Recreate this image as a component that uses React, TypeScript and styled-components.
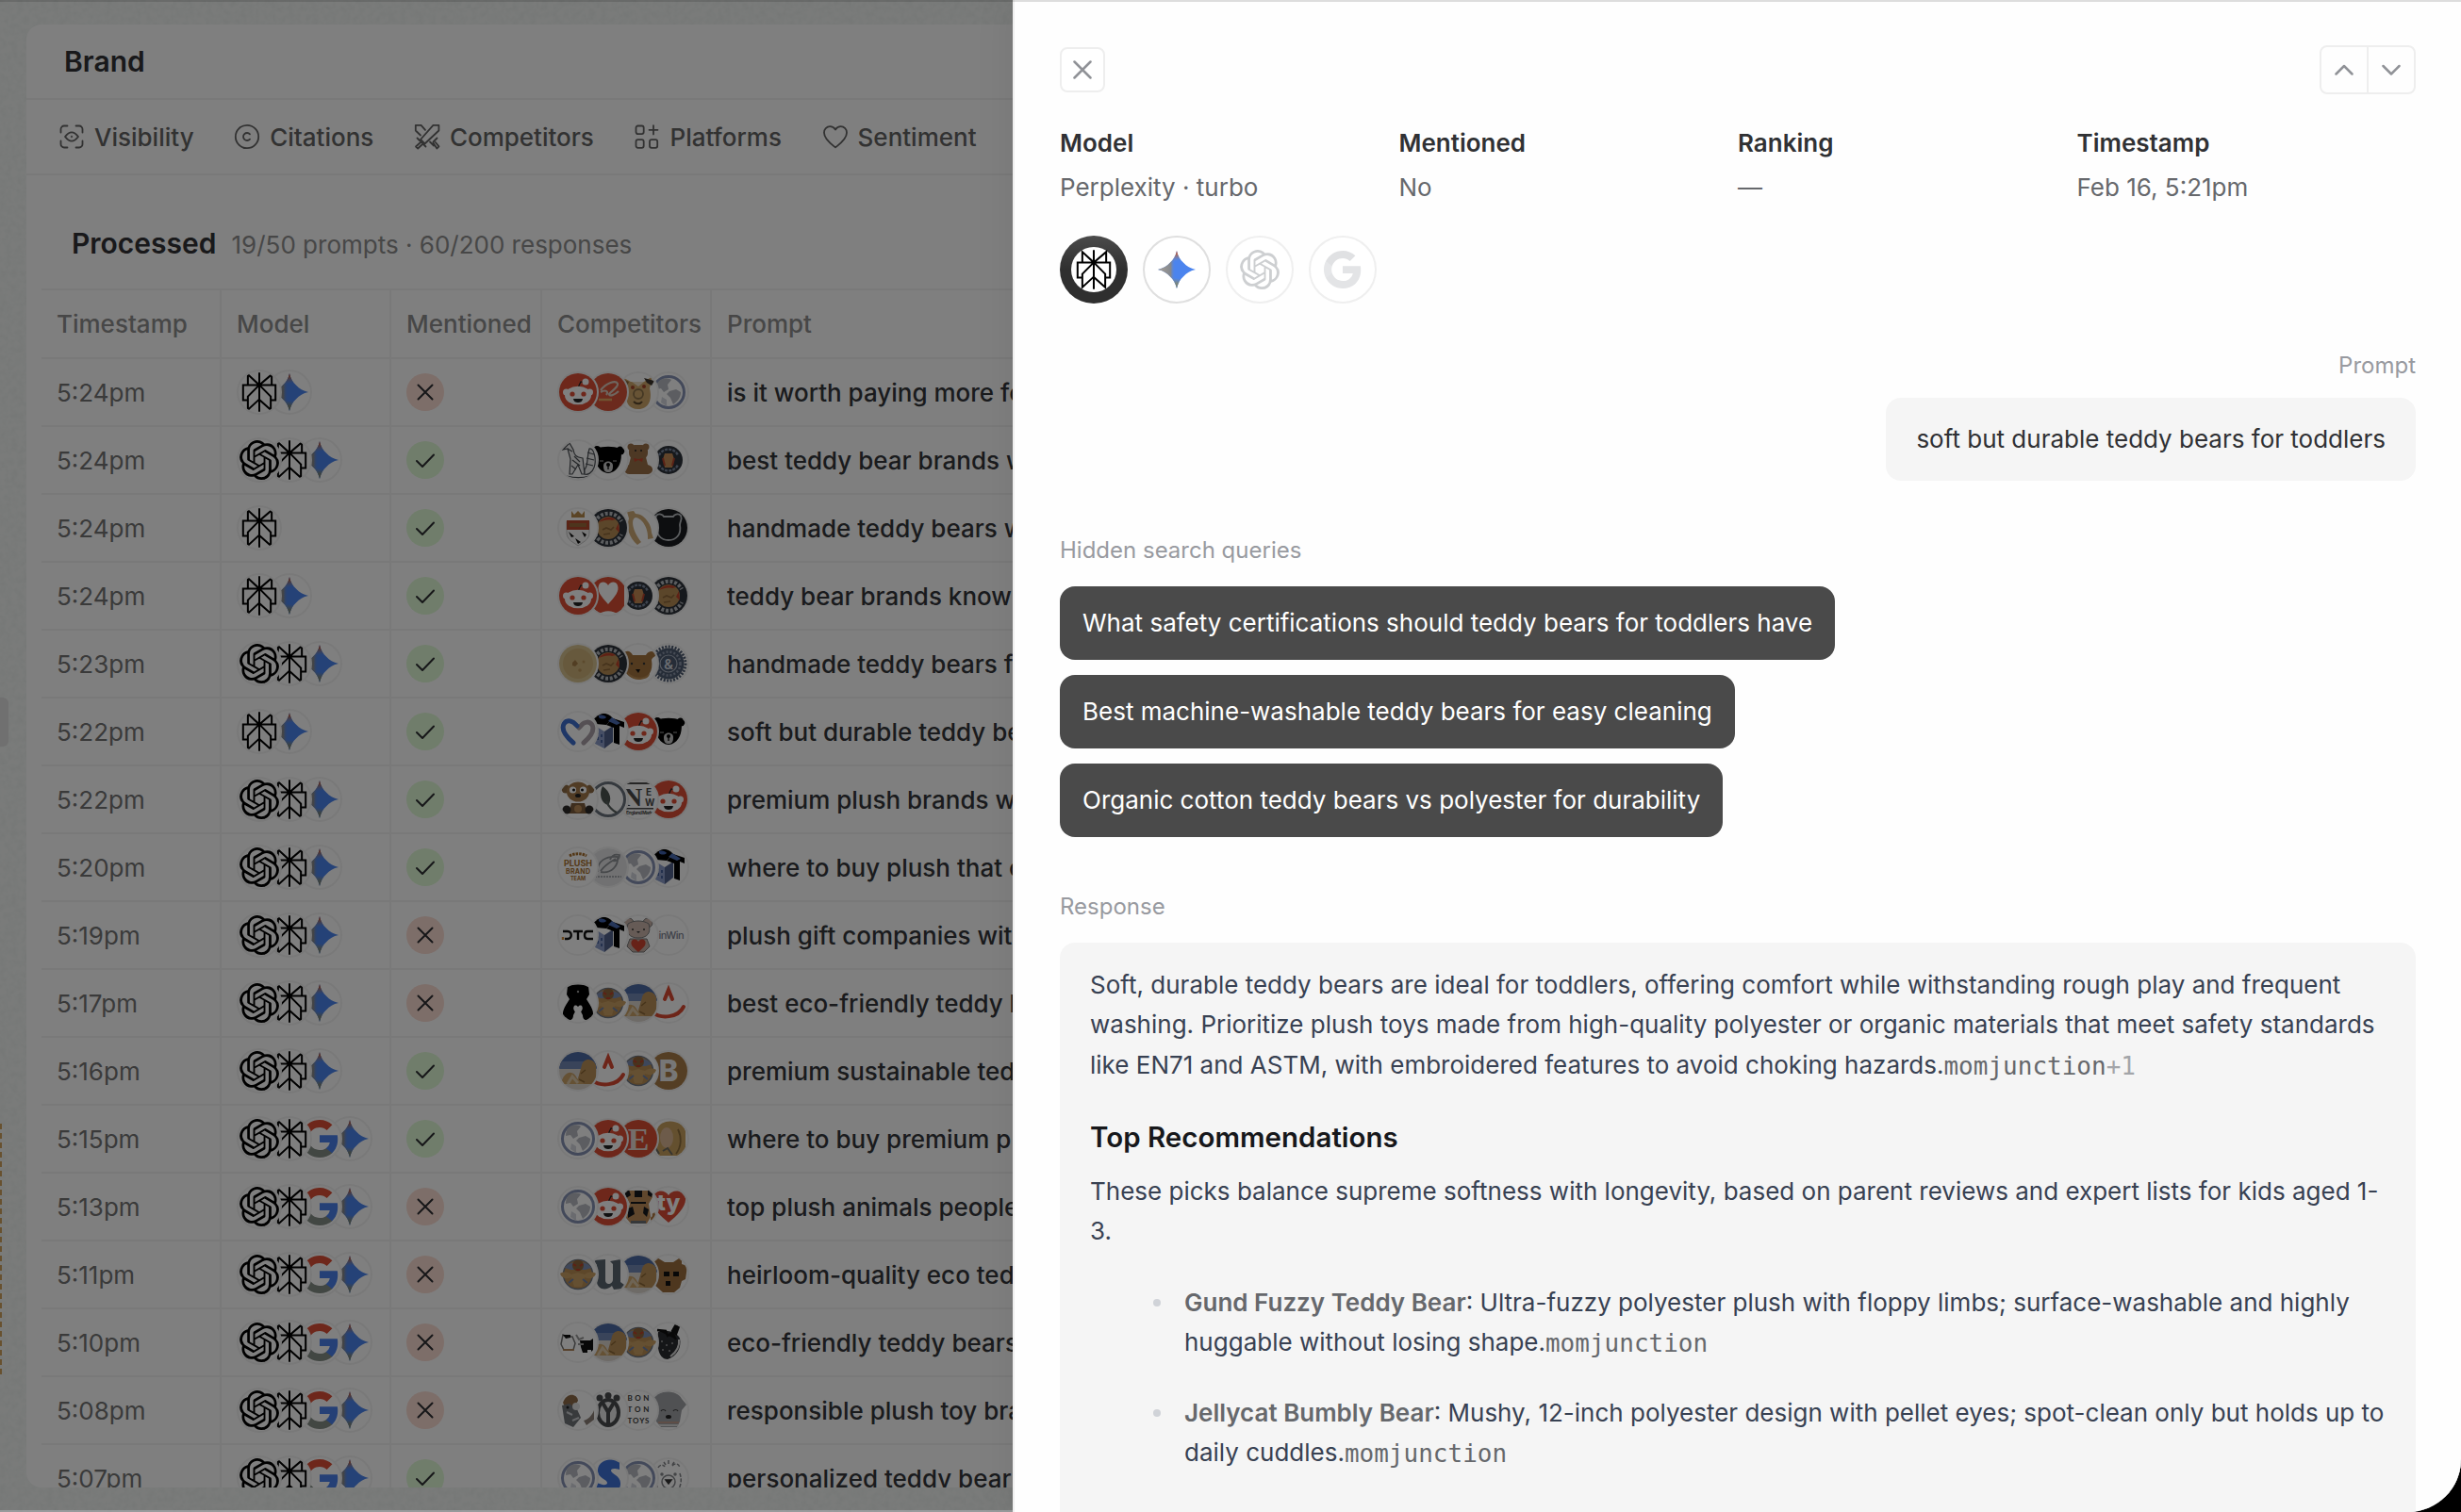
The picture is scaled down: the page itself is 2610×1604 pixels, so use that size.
import React from 'react'
import styled, { createGlobalStyle, css } from 'styled-components'
import { SiOpenai, SiPerplexity } from 'react-icons/si'

type Model = 'openai' | 'perplexity' | 'google' | 'gemini'

type ResponseRow = {
  time: string
  models: Model[]
  mentioned: boolean
  competitors: string[]
  prompt: string
}

const rows: ResponseRow[] = [
  { time: '5:24pm', models: ['perplexity', 'gemini'], mentioned: false, competitors: ['reddit', 'alibaba', 'terrier', 'globe'], prompt: 'is it worth paying more for' },
  { time: '5:24pm', models: ['openai', 'perplexity', 'gemini'], mentioned: true, competitors: ['fox', 'blackBear', 'teddy', 'vermontSmall'], prompt: 'best teddy bear brands w' },
  { time: '5:24pm', models: ['perplexity'], mentioned: true, competitors: ['crest', 'vermont', 'wishbone', 'darkBear'], prompt: 'handmade teddy bears w' },
  { time: '5:24pm', models: ['perplexity', 'gemini'], mentioned: true, competitors: ['reddit', 'redHeart', 'vermontSmall', 'vermont'], prompt: 'teddy bear brands know' },
  { time: '5:23pm', models: ['openai', 'perplexity', 'gemini'], mentioned: true, competitors: ['coin', 'vermont', 'brownFace', 'gear'], prompt: 'handmade teddy bears f' },
  { time: '5:22pm', models: ['perplexity', 'gemini'], mentioned: true, competitors: ['blueHeart', 'box', 'reddit', 'blackBear'], prompt: 'soft but durable teddy be' },
  { time: '5:22pm', models: ['openai', 'perplexity', 'gemini'], mentioned: true, competitors: ['cartoonBear', 'leaf', 'newEngland', 'reddit'], prompt: 'premium plush brands w' },
  { time: '5:20pm', models: ['openai', 'perplexity', 'gemini'], mentioned: true, competitors: ['orangeType', 'leafGray', 'globe', 'box'], prompt: 'where to buy plush that c' },
  { time: '5:19pm', models: ['openai', 'perplexity', 'gemini'], mentioned: false, competitors: ['dtc', 'box', 'pinkBear', 'inwin'], prompt: 'plush gift companies wit' },
  { time: '5:17pm', models: ['openai', 'perplexity', 'gemini'], mentioned: false, competitors: ['standingBear', 'giantTeddy', 'beach', 'smile'], prompt: 'best eco-friendly teddy b' },
  { time: '5:16pm', models: ['openai', 'perplexity', 'gemini'], mentioned: true, competitors: ['beach', 'smile', 'giantTeddy', 'brownB'], prompt: 'premium sustainable ted' },
  { time: '5:15pm', models: ['openai', 'perplexity', 'google', 'gemini'], mentioned: true, competitors: ['globe', 'reddit', 'etsy', 'blonde'], prompt: 'where to buy premium p' },
  { time: '5:13pm', models: ['openai', 'perplexity', 'google', 'gemini'], mentioned: false, competitors: ['globe', 'reddit', 'dog', 'ty'], prompt: 'top plush animals people' },
  { time: '5:11pm', models: ['openai', 'perplexity', 'google', 'gemini'], mentioned: false, competitors: ['giantTeddy', 'letterU', 'beach', 'blockBear'], prompt: 'heirloom-quality eco ted' },
  { time: '5:10pm', models: ['openai', 'perplexity', 'google', 'gemini'], mentioned: false, competitors: ['cow', 'beach', 'giantTeddy', 'strawberry'], prompt: 'eco-friendly teddy bears' },
  { time: '5:08pm', models: ['openai', 'perplexity', 'google', 'gemini'], mentioned: false, competitors: ['hedgehog', 'ringY', 'bonton', 'grayBear'], prompt: 'responsible plush toy bra' },
  { time: '5:07pm', models: ['openai', 'perplexity', 'google', 'gemini'], mentioned: true, competitors: ['globe', 'letterS', 'globe', 'sketchBear'], prompt: 'personalized teddy bear' },
]

const tabs = ['Visibility', 'Citations', 'Competitors', 'Platforms', 'Sentiment'] as const

const queries = [
  'What safety certifications should teddy bears for toddlers have',
  'Best machine-washable teddy bears for easy cleaning',
  'Organic cotton teddy bears vs polyester for durability',
]

const meta = [
  { label: 'Model', value: 'Perplexity · turbo' },
  { label: 'Mentioned', value: 'No' },
  { label: 'Ranking', value: '—' },
  { label: 'Timestamp', value: 'Feb 16, 5:21pm' },
]

const tabIcons: Record<(typeof tabs)[number], React.ReactNode> = {
  Visibility: (
    <>
      <path d="M2.500 9.500V6A3.500 3.500 0 0 1 6 2.500h3.500M18.500 2.500H22A3.500 3.500 0 0 1 25.500 6v3.500M25.500 18.500V22a3.500 3.500 0 0 1-3.500 3.500h-3.500M9.500 25.500H6A3.500 3.500 0 0 1 2.500 22v-3.500" />
      <path d="M7 14c2-2.600 4-4.600 7-4.600s5 2 7 4.600c-2 2.600-4 4.600-7 4.600s-5-2-7-4.600Z" />
      <circle cx="14" cy="14" r="0.3" />
    </>
  ),
  Citations: (
    <>
      <circle cx="14" cy="14" r="12.2" />
      <path d="M17 11.300a4 4 0 1 0 0 5.400" />
    </>
  ),
  Competitors: (
    <>
      <path d="M26.400 1.800h-6L7 17l4.500 4.500L26.400 7.500Z" />
      <path d="M3.500 15.500l9 9M7 20l-5 4.500 2.200 2L9 22M7 12.500 1.800 7.500V1.800h5.800l4.400 5" />
      <path d="M17 19.500l4 4M24.500 15.500l-4 4M20.500 20.500l3.800 6 2.200-2.200-3.600-4.300" />
    </>
  ),
  Platforms: (
    <>
      <rect x="2.500" y="2.500" width="8.200" height="8.600" rx="2" />
      <rect x="2.500" y="17.200" width="8.200" height="8.600" rx="2" />
      <rect x="17" y="17.200" width="8.200" height="8.600" rx="2" />
      <path d="M21 2.200v9.200M16.500 6.800h9" />
    </>
  ),
  Sentiment: (
    <path d="M14 25.400C10.500 22.500 2 17 2 9.800A6.300 6.300 0 0 1 8.300 3.200c2.500 0 4.400 1.300 5.700 3.300 1.300-2 3.200-3.300 5.700-3.300A6.300 6.300 0 0 1 26 9.800c0 7.200-8.500 12.700-12 15.600Z" />
  ),
}

const GeminiIcon: React.FC = () => (
  <svg width="40" height="40" viewBox="0 0 24 24">
    <defs>
      <linearGradient id="gem-left" x1="0" y1="0" x2="1" y2="0">
        <stop offset="0" stopColor="#a8a096" />
        <stop offset="0.34" stopColor="#85898f" />
        <stop offset="0.46" stopColor="#4b84ee" stopOpacity="0" />
      </linearGradient>
      <linearGradient id="gem-top" x1="0" y1="0" x2="0.15" y2="1">
        <stop offset="0" stopColor="#d8503a" />
        <stop offset="0.16" stopColor="#b0634c" />
        <stop offset="0.34" stopColor="#8a8f9a" stopOpacity="0" />
      </linearGradient>
      <linearGradient id="gem-bottom" x1="0" y1="1" x2="0.1" y2="0">
        <stop offset="0" stopColor="#6f7968" />
        <stop offset="0.18" stopColor="#7c867e" />
        <stop offset="0.32" stopColor="#828c84" stopOpacity="0" />
      </linearGradient>
    </defs>
    {['#4b84ee', 'url(#gem-left)', 'url(#gem-top)', 'url(#gem-bottom)'].map((fill) => (
      <path
        key={fill}
        fill={fill}
        d="M12 0c.7 3.300 2.200 5.800 4.300 7.700C18.200 9.800 20.700 11.300 24 12c-3.300.7-5.800 2.200-7.700 4.300C14.200 18.200 12.700 20.700 12 24c-.7-3.300-2.200-5.800-4.300-7.700C5.800 14.200 3.300 12.700 0 12c3.300-.7 5.800-2.200 7.700-4.300C9.800 5.800 11.300 3.300 12 0Z"
      />
    ))}
  </svg>
)

const GoogleIcon: React.FC<{ muted?: boolean }> = ({ muted }) => (
  <svg width="40" height="40" viewBox="1 1 22 22">
    <path fill={muted ? '#e3e4e6' : '#4b80ec'} d="M22.56 12.25c0-.78-.07-1.53-.2-2.25H12v4.26h5.92c-.26 1.37-1.04 2.53-2.21 3.31v2.77h3.57c2.08-1.92 3.28-4.74 3.28-8.09z" />
    <path fill={muted ? '#e3e4e6' : '#858e87'} d="M12 23c2.97 0 5.46-.98 7.28-2.66l-3.57-2.77c-.98.66-2.23 1.06-3.71 1.06-2.86 0-5.29-1.93-6.16-4.53H2.18v2.84C3.99 20.53 7.7 23 12 23z" />
    <path fill={muted ? '#e6e7e9' : '#e8a93a'} d="M5.84 14.09c-.22-.66-.35-1.36-.35-2.09s.13-1.43.35-2.09V7.07H2.18C1.43 8.55 1 10.22 1 12s.43 3.45 1.18 4.93l2.85-2.22.81-.62z" />
    <path fill={muted ? '#e0e1e3' : '#dd4f36'} d="M12 5.38c1.62 0 3.06.56 4.21 1.64l3.15-3.15C17.45 2.09 14.97 1 12 1 7.7 1 3.99 3.47 2.18 7.07l3.66 2.84c.87-2.6 3.3-4.53 6.16-4.53z" />
  </svg>
)

const modelIcons: Record<Model, React.ReactNode> = {
  openai: <SiOpenai size={42} />,
  perplexity: <SiPerplexity size={42} />,
  google: <GoogleIcon />,
  gemini: <GeminiIcon />,
}

// favicons, drawn on a 40x40 grid and clipped to a circle by the avatar
const favicons: Record<string, React.ReactNode> = {
  reddit: (
    <>
      <rect width="40" height="40" fill="#dd4f36" />
      <path d="M20 15l3-6 5 1" stroke="#222" strokeWidth="1.2" fill="none" />
      <ellipse cx="20" cy="23.5" rx="14" ry="9.8" fill="#fff" />
      <circle cx="7.5" cy="20" r="3.5" fill="#fff" />
      <circle cx="32.5" cy="20" r="3.5" fill="#fff" />
      <circle cx="28" cy="9" r="3.5" fill="#fff" />
      <circle cx="14" cy="22" r="2.6" fill="#dd4f36" />
      <circle cx="26" cy="22" r="2.6" fill="#dd4f36" />
      <path d="M15 27h10c-.5 3-2.500 4-5 4s-4.500-1-5-4Z" fill="#222" />
    </>
  ),
  alibaba: (
    <>
      <rect width="40" height="40" fill="#d8553a" />
      <path d="M12 18c6-8 16-11 18-7 1 4-7 8-9 11 0 3 6 1 10-3M12 20c5-3 9-1 6 3" stroke="#dccabc" strokeWidth="2.2" fill="none" />
      <path d="M10 28h14" stroke="#e0a863" strokeWidth="2.6" />
    </>
  ),
  terrier: (
    <>
      <path d="M3 4l9 5h14l9-6-3 13c3 12-1 22-12 22S6 30 7 19Z" fill="#cfa76b" />
      <path d="M13 9h13l-6 5Z" fill="#eadcc4" />
      <path d="M26 5l11 3-3 5-5-3Z" fill="#3d342c" />
      <path d="M4 6l6 3-2 5Z" fill="#8a6638" />
      <circle cx="14" cy="15" r="2" fill="#a5452a" />
      <circle cx="26" cy="14" r="2" fill="#a5452a" />
      <circle cx="20" cy="22" r="5" fill="none" stroke="#8b7048" strokeWidth="1.8" />
      <path d="M15 30c3 3 7 3 9 0" stroke="#5a472d" strokeWidth="2" fill="none" />
    </>
  ),
  globe: (
    <>
      <circle cx="20" cy="20" r="16.5" fill="#fff" stroke="#8793b5" strokeWidth="3" />
      <path d="M10 8c5-4 10-3 13-1l-4 5 1 5-5 3-3-4-5 1c0-4 1-7 3-9ZM21 19l7-2 5 3c0 6-4 10-8 13l-3-7-4-4Z" fill="#b8bbc3" />
      <path d="M13 25l5 3v7l-6-4Z" fill="#d4d7de" />
    </>
  ),
  fox: (
    <g fill="#eee" stroke="#4c5055" strokeWidth="1.2">
      <path d="M4 9l7-7 4 7c1 6 3 8 10 9l2 17h-3l-4-10-6 10h-3l1-16-3-11Z" />
      <path d="M27 30c4-4 2-12 5-22 5-1 8 12 5 20-2 6-7 8-10 7Z" />
      <path d="M8 37c8 2 17 2 24 0M9 8l5 3M14 20l8 6M16 16l6 6M13 26l5 4M30 12l7 2M29 18l8 2M28 24l8 2" fill="none" />
    </g>
  ),
  blackBear: (
    <>
      <circle cx="8" cy="10" r="5" fill="#000" />
      <circle cx="33" cy="10" r="4.5" fill="#000" />
      <path d="M7 8c8-3 18-3 26 0 3 12-2 25-13 26C9 33 4 20 7 8Z" fill="#000" />
      <path d="M15 26c0-6 10-6 10 0s-2 7-5 7-5-1-5-7Z" fill="#c9c9c9" />
      <circle cx="20" cy="25" r="2" fill="#000" />
      <path d="M20 26v4M12 20l3 1M28 20l-3 1" stroke="#000" strokeWidth="1.3" />
      <path d="M11 21h4M25 21h4" stroke="#aaa" strokeWidth="1.2" />
    </>
  ),
  teddy: (
    <g fill="#9a7148">
      <circle cx="12" cy="6" r="3.5" />
      <circle cx="28" cy="6" r="3.5" />
      <rect x="10" y="4" width="20" height="15" rx="6" />
      <path d="M12 17h16l2 8c8 2 6 11-2 10h-16c-8 1-9-8-2-10Z" />
      <circle cx="17" cy="10" r="1" fill="#222" />
      <circle cx="23" cy="10" r="1" fill="#222" />
      <path d="M15 18l5 1 5-1-1 4-4-2-4 2Z" fill="#c0472f" />
    </g>
  ),
  vermontSmall: (
    <>
      <circle cx="20" cy="20" r="15" fill="#2d323a" />
      <path d="M10 15a11 11 0 0 1 20 0M10 25a11 11 0 0 0 20 0" fill="none" stroke="#7b879c" strokeWidth="2.4" strokeDasharray="3 1.2" />
      <path d="M16 13h8l2 6-2 9h-8l-2-9Z" fill="#c48a54" />
      <path d="M14 18l2 8M26 18l-2 8" stroke="#b4432c" strokeWidth="2" />
    </>
  ),
  vermont: (
    <>
      <rect width="40" height="40" fill="#2d323a" />
      <path d="M6 14A15.500 15.500 0 0 1 34 13M6 27a15.500 15.500 0 0 0 28 0" fill="none" stroke="#b5b8bd" strokeWidth="4" strokeDasharray="3 1.8" />
      <circle cx="20" cy="20" r="12" fill="#b68c55" />
      <path d="M10 14c4-5 12-7 18-3l-4 1c-5-1-9 0-14 2ZM31 15l1 10-4-4Z" fill="#c0432b" />
      <path d="M14 22l4-2 5 2 3-3M15 27l7-1" stroke="#8c6638" strokeWidth="1.6" fill="none" />
    </>
  ),
  crest: (
    <>
      <path d="M13 2l3 4 4-4 4 4 3-4v7H13Z" fill="#b78a4c" />
      <path d="M8 13h24v12c0 8-7 10-12 14-5-4-12-6-12-14Z" fill="#f4f4f4" stroke="#c5c5c5" />
      <path d="M8 12h24v10H8Z" fill="#b4482c" />
      <path d="M11 15h18v4H11Z" fill="#9a6a3a" />
      <path d="M10 24l6 5-3 1ZM24 24l5 3-2 3ZM17 31l6 4-3 2Z" fill="#111" />
    </>
  ),
  wishbone: (
    <path d="M8 3l7-1 2 3c9 0 17 11 17 20l2 6-6 1c1-10-5-22-13-23-6 2-2 16 6 26l-4 3C10 30 7 20 10 10Z" fill="#cfab77" />
  ),
  darkBear: (
    <>
      <rect width="40" height="40" fill="#1b1d20" />
      <path d="M7 7c3-3 7-1 8 1h10c1-2 5-4 8-1 2 4-1 6-1 10 2 10-4 16-12 16S6 27 8 17c0-4-3-6-1-10Z" fill="#1b1d20" stroke="#b9bcc0" strokeWidth="1.8" />
    </>
  ),
  redHeart: (
    <>
      <rect width="37" height="36" fill="#db4f34" />
      <path d="M20 29C12 20 8 15 10 9c2-5 8-4 10 0 2-4 8-5 10 0 2 6-2 11-10 20Z" fill="#fff" />
      <path d="M4 38l4-6h24l5 4v2Z" fill="#db4f34" />
      <path d="M10 40c4-5 16-5 20 0Z" fill="#fff" />
    </>
  ),
  coin: (
    <>
      <rect width="40" height="40" fill="#d6c290" />
      <circle cx="20" cy="20" r="16" fill="#cfb27a" />
      <path d="M14 19l3-3 3 4-3 3-3-1Z" fill="#a57d47" />
      <circle cx="22" cy="27" r="1.8" fill="#b8955b" />
      <circle cx="26" cy="18" r="1.5" fill="#b8955b" />
    </>
  ),
  brownFace: (
    <>
      <path d="M4 9c4-4 8-2 10 2h14c2-4 8-6 11-1-1 3-4 3-5 6 2 12-3 20-14 20-14 0-17-12-14-19Z" fill="#a4743f" />
      <path d="M8 28c6 8 18 9 24 2 0 5-6 7-12 7s-11-4-12-9Z" fill="#bb8a50" />
      <path d="M17 26h5l-2 4Z" fill="#111" />
      <circle cx="13" cy="20" r="1.2" fill="#333" />
      <circle cx="26" cy="20" r="1.2" fill="#333" />
    </>
  ),
  gear: (
    <>
      <circle cx="20" cy="20" r="18" fill="none" stroke="#4d5a70" strokeWidth="3" strokeDasharray="2 1.5" />
      <circle cx="20" cy="20" r="16.5" fill="#4d5a70" />
      <circle cx="20" cy="20" r="12.5" fill="none" stroke="#8d97aa" strokeWidth="2.5" strokeDasharray="2 2" />
      <circle cx="20" cy="20" r="9" fill="#4d5a70" stroke="#a9b1bf" strokeWidth="1.2" />
      <text x="20" y="25.500" fontSize="15" textAnchor="middle" fill="#d3d8e0" fontWeight="600">&amp;</text>
    </>
  ),
  blueHeart: (
    <g fill="none" strokeWidth="5" strokeLinecap="round">
      <path d="M26 32c8-7 12-13 9-19-3-4-8-4-12 1l-2 2" stroke="#aaa0a8" />
      <path d="M15 32C8 26 2 18 5 12c3-5 9-4 14 2" stroke="#3f6fce" />
    </g>
  ),
  box: (
    <>
      <path d="M3 12l13 8v18L6 33Z" fill="#8d9dc8" />
      <path d="M16 20l9-6v17l-9 7Z" fill="#53628c" />
      <path d="M2 6C8-1 20-1 25 6l-7 7-11-1Z" fill="#000" />
      <path d="M10 3c3-1 7 0 8 2-2 2-6 2-8 0Z" fill="#3e60ad" />
      <path d="M25 6l12 4v6l-5-2v20l-6-2V16l-8-3Z" fill="#000" />
      <path d="M24 5l9 6-4 2-9-4Z" fill="#4b6cb4" />
      <path d="M9 20v3M9 26v3M13 23v3M13 29v3" stroke="#33508e" strokeWidth="1.5" />
    </>
  ),
  cartoonBear: (
    <>
      <circle cx="7" cy="9" r="4.5" fill="#8d6b44" />
      <circle cx="33" cy="9" r="4.5" fill="#8d6b44" />
      <ellipse cx="20" cy="12" rx="12" ry="10.500" fill="#a3794a" />
      <circle cx="14.500" cy="10" r="3.6" fill="#fff" />
      <circle cx="25.500" cy="10" r="3.6" fill="#fff" />
      <circle cx="15.500" cy="10" r="1.5" fill="#111" />
      <circle cx="24.500" cy="10" r="1.5" fill="#111" />
      <ellipse cx="20" cy="16" rx="3" ry="2" fill="#222" />
      <path d="M13 24h14l3 11H10Z" fill="#7c5d3c" />
      <circle cx="20" cy="30" r="4" fill="#b88b58" />
      <circle cx="8" cy="31" r="4.5" fill="#2c2a28" />
      <circle cx="32" cy="31" r="4.5" fill="#2c2a28" />
    </>
  ),
  leaf: (
    <>
      <circle cx="20" cy="20" r="17.500" fill="none" stroke="#6a737d" strokeWidth="3" />
      <path d="M14 6c9 6 10 15 6 20-8-2-10-12-6-20Z" fill="#4c5450" />
      <path d="M18 22c3 7 7 10 11 12" stroke="#59615f" strokeWidth="2" fill="none" />
    </>
  ),
  newEngland: (
    <g fill="#4a4a4a">
      <rect x="8" y="2" width="24" height="2" />
      <text x="4" y="27" fontFamily="Liberation Serif, serif" fontSize="28" fontWeight="700">N</text>
      <text x="28" y="16" fontSize="10" fontWeight="700">E</text>
      <text x="27" y="27" fontSize="10" fontWeight="700">W</text>
      <rect x="6" y="29" width="30" height="1.500" />
      <text x="7" y="35.500" fontSize="5" fontWeight="700" textLength="28">England Mark</text>
    </g>
  ),
  orangeType: (
    <g fill="#a8712f" fontWeight="700" textAnchor="middle">
      <path d="M11 8c5-3 13-3 18 0" stroke="#a8712f" strokeWidth="3" strokeDasharray="2.500 1" fill="none" />
      <text x="20" y="19" fontSize="9" textLength="30">PLUSH</text>
      <text x="20" y="27" fontSize="7" textLength="26">BRAND</text>
      <text x="20" y="34" fontSize="5.500">TEAM</text>
    </g>
  ),
  leafGray: (
    <>
      <rect width="40" height="40" fill="#e2e3e5" />
      <path d="M9 25C8 13 18 8 30 9c1 9-6 18-18 16M12 24c4-6 9-9 16-13M22 12c2-5 6-6 10-5 0 5-4 7-8 6" fill="none" stroke="#8f9297" strokeWidth="1.800" />
      <path d="M6 30h28" stroke="#a5a8ac" strokeWidth="2" strokeDasharray="2 1" />
    </>
  ),
  dtc: (
    <g fill="none" stroke="#111" strokeWidth="2.400">
      <path d="M4 16h5c5 0 5 8 0 8H6M15 16h10M20 16v9M36 16h-6c-4 0-4 8 0 8h6" />
      <path d="M4 22v3" stroke="#d08a3a" />
    </g>
  ),
  inwin: (
    <text x="23" y="24" fontSize="11" fontWeight="500" fill="#7d8291" textAnchor="middle" textLength="27">inWin</text>
  ),
  pinkBear: (
    <>
      <circle cx="10" cy="7" r="5" fill="#c9b3a9" stroke="#777" />
      <circle cx="30" cy="7" r="5" fill="#c9b3a9" stroke="#777" />
      <path d="M9 8c6-4 16-4 22 0 3 10-2 15-11 15S6 18 9 8Z" fill="#cdb7ad" stroke="#777" />
      <path d="M11 24h18l3 8-6 6H14l-6-6Z" fill="#c4aea5" stroke="#777" />
      <path d="M20 38c-6-5-9-8-7-12 2-2 5-2 7 1 2-3 5-3 7-1 2 4-1 7-7 12Z" fill="#cf4530" />
      <path d="M18 16h4l-2 2Z" fill="#333" />
      <circle cx="14" cy="14" r="1" fill="#333" />
      <circle cx="26" cy="14" r="1" fill="#333" />
    </>
  ),
  standingBear: (
    <>
      <path d="M9 2c4-2 18-2 22 0l1 9-3 5c5 8 10 15 5 21-5 3-9 1-9-4l-2-4h-6l-2 4c0 5-4 7-9 4-5-6 0-13 5-21l-3-5Z" fill="#000" />
      <path d="M20 32c-4-3-6-6-4-9 2-1 3 0 4 1 1-1 2-2 4-1 2 3 0 6-4 9Z" fill="#fff" />
      <path d="M18 32h4v8h-4Z" fill="#fff" />
      <circle cx="20" cy="8" r="1.200" fill="#999" />
    </>
  ),
  giantTeddy: (
    <>
      <circle cx="20" cy="20" r="15.500" fill="#bb8f55" stroke="#6f7886" strokeWidth="1.500" />
      <path d="M6 13c4-8 24-8 28 0l-6 2H12Z" fill="#7d8fb5" />
      <circle cx="20" cy="10.500" r="6" fill="#91663c" />
      <path d="M1 19c5-3 9-1 12 1l7-2 7 2c3-2 7-4 12-1-2 6-8 6-12 4l-3 10h-8l-3-10c-4 2-10 2-12-4Z" fill="#caa064" />
      <path d="M15 9l3 2M25 9l-3 2M18 15h4" stroke="#bd4129" strokeWidth="2" />
      <path d="M10 29l5-4M30 29l-5-4" stroke="#6e7fa2" strokeWidth="2" />
    </>
  ),
  beach: (
    <>
      <rect width="40" height="40" fill="#dcd6cf" />
      <rect width="40" height="17" fill="#4d6ba5" />
      <path d="M0 10h40v8H0Z" fill="#7389b5" />
      <path d="M24 14c2-8 12-8 15 0v20H22l-2-6Z" fill="#bb9159" />
      <path d="M3 30c4-10 12-11 16-2l8 6H5Z" fill="#caa269" />
      <path d="M9 34l5-8 6 7" stroke="#dcc8a8" strokeWidth="3" fill="none" />
      <path d="M23 23l5-4M21 29l6 3" stroke="#8c6836" strokeWidth="1.500" />
    </>
  ),
  smile: (
    <g fill="none" stroke="#da4b33" strokeLinecap="round">
      <path d="M16 16l4-10 4 10" strokeWidth="4" />
      <path d="M3 30c9 7 27 6 33-6" strokeWidth="4" />
    </g>
  ),
  brownB: (
    <>
      <rect width="40" height="40" fill="#a97c49" />
      <text x="20" y="31" fontSize="31" fontWeight="800" fill="#eee" textAnchor="middle">B</text>
    </>
  ),
  etsy: (
    <>
      <rect width="40" height="40" fill="#db4e33" />
      <text x="20" y="31.500" fontSize="34" fontWeight="700" fill="#e9dcd5" textAnchor="middle" fontFamily="Liberation Serif, serif">E</text>
    </>
  ),
  blonde: (
    <>
      <path d="M8 10C12-2 34-1 38 12v20l-8 6H10L4 26Z" fill="#c9a05f" />
      <ellipse cx="18" cy="19" rx="7" ry="11" fill="#dab695" />
      <path d="M7 12l-3 14 6 10M14 33l5-3 5 7" stroke="#6d6a60" strokeWidth="2" fill="none" />
      <path d="M30 10c4 8 4 18-2 26" stroke="#8d6e3c" strokeWidth="1.800" fill="none" />
    </>
  ),
  dog: (
    <>
      <path d="M8 3h24l3 7-4 7 2 14-4 7H12l-5-6 4-15-4-8Z" fill="#c18e5b" />
      <path d="M5 3l5-1 2 6-5 3ZM30 2l6 2-2 6-4-2ZM16 3h8v7h-8ZM9 22l5-2 2 8-7 4ZM26 20l5 3-2 8-4-4ZM12 15h16v2H12Z" fill="#17191c" />
      <path d="M12 35h16v3H12Z" fill="#6d7074" />
      <path d="M33 33c3 0 4-4 3-6" stroke="#b27b43" strokeWidth="3" fill="none" />
    </>
  ),
  ty: (
    <>
      <path d="M20 37C12 30 1 21 3 11 5 2 16 1 20 8c4-7 16-6 18 3 1 9-9 19-18 26Z" fill="#dc4c37" />
      <text x="20" y="24" fontSize="24" fontWeight="800" fill="#fff" textAnchor="middle">ty</text>
    </>
  ),
  letterU: (
    <path d="M5 5l12-1v22c0 6 8 5 8-1V9l-3-3 11-2v24l4 3-1 4-10 1-2-4c-6 6-16 4-16-5V10Z" fill="#5a6670" />
  ),
  blockBear: (
    <>
      <path d="M6 1l10 6h9l9-6v8l6 2-2 14-4 2-2 7-6 5H14L4 30 2 16Z" fill="#9c6f3e" />
      <path d="M15 17h6v5h-6ZM25 17h6v5h-6ZM17 27h5v5h-5Z" fill="#111" />
    </>
  ),
  cow: (
    <>
      <path d="M4 12l4 2h6l3 7-2 7H5l-3-6Z" fill="#fff" stroke="#777" strokeWidth="1.500" />
      <path d="M4 12h8v3l-5 1ZM22 18h11l3-2v12l-2 2v-2h-4v3h-5l-2-6Z" fill="#111" />
      <path d="M18 12l3 5 5-2M20 22h6" stroke="#999" strokeWidth="2" fill="none" />
      <path d="M4 28h12" stroke="#b9824a" strokeWidth="1.500" />
    </>
  ),
  strawberry: (
    <>
      <path d="M9 9c8-3 20 0 23 7 2 9-3 19-13 22-9 0-12-12-10-29Z" fill="#2b2d30" />
      <path d="M24 8l4-7 3 2-3 8ZM8 7l9 1 2 5 5-3 4 7" stroke="#111" strokeWidth="2.500" fill="#111" />
      <path d="M31 17c1 8-2 13-9 18" stroke="#ddd" strokeWidth="2" fill="none" />
      <path d="M13 18v2M18 22v2M14 27v2M21 28v2M24 20v2" stroke="#999" strokeWidth="1.500" />
    </>
  ),
  hedgehog: (
    <>
      <path d="M4 12C8 1 19 2 20 10l-4 6H6Z" fill="#8d6b48" />
      <path d="M3 15l8-2 8 6 4 9-8 10-9-4Z" fill="#707479" />
      <circle cx="18" cy="16" r="4" fill="#e2e2e2" />
      <path d="M26 31c4-1 9-5 11-11v10l-8 6Z" fill="#8c8078" />
      <path d="M8 22l6 3M14 31l7-3" stroke="#c9cbce" strokeWidth="2" />
      <circle cx="9" cy="17" r="1.500" fill="#222" />
    </>
  ),
  ringY: (
    <>
      <circle cx="11" cy="7" r="3.500" fill="#4a4c4f" />
      <circle cx="20" cy="4.500" r="3.500" fill="#4a4c4f" />
      <circle cx="29" cy="7" r="3.500" fill="#4a4c4f" />
      <ellipse cx="20" cy="22.500" rx="11" ry="13.500" fill="#e8e8e8" stroke="#4a4c4f" strokeWidth="4" />
      <path d="M14 12l6 10 6-10M20 21v13" stroke="#4a4c4f" strokeWidth="4" fill="none" />
    </>
  ),
  bonton: (
    <g fill="#3c3c3c" fontWeight="700" fontSize="8" textAnchor="middle" fontFamily="Lato, sans-serif">
      <text x="20" y="10" textLength="23">BON</text>
      <text x="20" y="22" textLength="23">TON</text>
      <text x="20" y="34" textLength="23">TOYS</text>
    </g>
  ),
  grayBear: (
    <>
      <path d="M5 6C12-2 30-1 34 8l5 6-5 6-2 12-3 6H12L7 32Z" fill="#a0a2a6" />
      <path d="M12 21c1-2 4-2 5 0M25 21c1-2 4-2 5 0" stroke="#444" strokeWidth="1.200" fill="none" />
      <ellipse cx="20" cy="27" rx="3" ry="2" fill="#222" />
      <path d="M9 33h22" stroke="#c99a86" strokeWidth="1.500" />
      <path d="M10 36h20" stroke="#ddd" strokeWidth="2" />
    </>
  ),
  letterS: (
    <path d="M32 2v9c-6-2-9-1-9 1 0 4 11 5 10 15-1 11-18 12-26 7v-10c6 4 12 4 12 1 0-4-11-5-10-14C10 1 23-2 32 2Z" fill="#3f72d8" />
  ),
  sketchBear: (
    <g fill="none" stroke="#84878b" strokeWidth="1.500">
      <path d="M9 9c2-4 6-3 7-1M24 7c2-3 7-3 8 2M7 15c-3 12 3 22 13 22s16-10 12-22" strokeDasharray="4 1.500" />
      <circle cx="20" cy="24" r="7" />
      <circle cx="13" cy="16" r="1" />
      <circle cx="27" cy="16" r="1" />
      <path d="M17 22h6l-3 4Z" fill="#333" stroke="#333" />
      <path d="M20 1v4M15 3l2 3M26 3l-2 3" />
    </g>
  ),
}

const App: React.FC = () => (
  <Screen>
    <GlobalStyle />
    <Grain preserveAspectRatio="none">
      <filter id="grain">
        <feTurbulence type="fractalNoise" baseFrequency="0.16" numOctaves={2} seed={4} />
        <feColorMatrix values="0 0 0 0 0.55  0 0 0 0 0.6  0 0 0 0 0.58  0.9 0 0 0 -0.3" />
      </filter>
      <rect width="100%" height="100%" filter="url(#grain)" />
    </Grain>
    <EdgeSmudge />
    <EdgeStitch />

    <Card>
      <CardHeader>Brand</CardHeader>
      <Tabs>
        {tabs.map((tab) => (
          <Tab key={tab}>
            <svg width="28" height="28" viewBox="0 0 28 28">{tabIcons[tab]}</svg>
            {tab}
          </Tab>
        ))}
      </Tabs>
      <SectionTitle>
        <h2>Processed</h2>
        <span>19/50 prompts · 60/200 responses</span>
      </SectionTitle>
      <Table>
        <HeadRow>
          <HeadCell>Timestamp</HeadCell>
          <HeadCell>Model</HeadCell>
          <HeadCell>Mentioned</HeadCell>
          <HeadCell>Competitors</HeadCell>
          <HeadCell>Prompt</HeadCell>
        </HeadRow>
        {rows.map((row, i) => (
          <Row key={i}>
            <Cell>{row.time}</Cell>
            <Cell>
              <Stack>
                {row.models.map((model) => (
                  <Avatar key={model} size={48}>{modelIcons[model]}</Avatar>
                ))}
              </Stack>
            </Cell>
            <Cell>
              <Mention yes={row.mentioned}>
                <svg width="20" height="20" viewBox="0 0 20 20">
                  <path d={row.mentioned ? 'M1 11l6 6L19 4.500' : 'M2.500 2.500l15 15M17.500 2.500l-15 15'} />
                </svg>
              </Mention>
            </Cell>
            <Cell>
              <Stack>
                {row.competitors.map((name, j) => (
                  <Avatar key={j} size={44}>
                    <svg width="40" height="40" viewBox="0 0 40 40">{favicons[name]}</svg>
                  </Avatar>
                ))}
              </Stack>
            </Cell>
            <PromptCell>{row.prompt}</PromptCell>
          </Row>
        ))}
      </Table>
    </Card>

    <Dimmer />
    <Drawer>
      <Toolbar>
        <IconButton>
          <svg width="20" height="20" viewBox="0 0 20 20"><path d="M1.500 1.500l17 17M18.500 1.500l-17 17" /></svg>
        </IconButton>
        <Pager>
          <PagerButton>
            <svg width="20" height="20" viewBox="0 0 20 20"><path d="M1.500 14.500 10 6l8.500 8.500" /></svg>
          </PagerButton>
          <PagerButton>
            <svg width="20" height="20" viewBox="0 0 20 20"><path d="M1.500 6 10 14.500 18.500 6" /></svg>
          </PagerButton>
        </Pager>
      </Toolbar>

      <MetaGrid>
        {meta.map(({ label, value }) => (
          <div key={label}>
            <MetaLabel>{label}</MetaLabel>
            <MetaValue>{value}</MetaValue>
          </div>
        ))}
      </MetaGrid>

      <ModelPicker>
        <SelectedModel><span><SiPerplexity size={42} /></span></SelectedModel>
        <ModelOption><GeminiIcon /></ModelOption>
        <ModelOption disabled><SiOpenai size={42} /></ModelOption>
        <ModelOption disabled><GoogleIcon muted /></ModelOption>
      </ModelPicker>

      <PromptBlock>
        <Label>Prompt</Label>
        <Bubble>soft but durable teddy bears for toddlers</Bubble>
      </PromptBlock>

      <Queries>
        <Label>Hidden search queries</Label>
        {queries.map((query) => (
          <Query key={query}>{query}</Query>
        ))}
      </Queries>

      <Label>Response</Label>
      <Answer>
        <p>
          Soft, durable teddy bears are ideal for toddlers, offering comfort while withstanding rough play and frequent
          washing. Prioritize plush toys made from high-quality polyester or organic materials that meet safety standards
          like EN71 and ASTM, with embroidered features to avoid choking hazards.<Source>momjunction<i>+1</i></Source>
        </p>
        <h3>Top Recommendations</h3>
        <p>
          These picks balance supreme softness with longevity, based on parent reviews and expert lists for kids aged
          1-<wbr />3.
        </p>
        <ul>
          <li>
            <strong>Gund Fuzzy Teddy Bear</strong>: Ultra-fuzzy polyester plush with floppy limbs; surface-washable and highly
            huggable without losing shape.<Source>momjunction</Source>
          </li>
          <li>
            <strong>Jellycat Bumbly Bear</strong>: Mushy, 12-inch polyester design with pellet eyes; spot-clean only but holds up to
            daily cuddles.<Source>momjunction</Source>
          </li>
        </ul>
      </Answer>
    </Drawer>
    <WindowEdge />
  </Screen>
)

export default App

const GlobalStyle = createGlobalStyle`
  *, *::before, *::after {
    box-sizing: border-box;
  }

  body {
    margin: 0;
    background: #000;
    font-family: Inter, sans-serif;
    font-size: 26px;
  }

  h2, h3, p, ul {
    margin: 0;
    padding: 0;
  }

  svg {
    display: block;
    flex: none;
  }
`

const Screen = styled.div`
  position: relative;
  width: 2610px;
  height: 1604px;
  overflow: hidden;
  padding: 26px 0 26px 28px;
  background: #f4f7f5;
  border-bottom-right-radius: 56px;
`

const Grain = styled.svg`
  position: absolute;
  inset: 0;
  width: 100%;
  height: 100%;
  opacity: 0.35;
`

const EdgeSmudge = styled.div`
  position: absolute;
  left: 0;
  top: 740px;
  width: 9px;
  height: 52px;
  border-radius: 0 6px 6px 0;
  background: #e0e0e0;
`

const EdgeStitch = styled.div`
  position: absolute;
  left: 0;
  top: 1192px;
  width: 2px;
  height: 268px;
  background: repeating-linear-gradient(#d0a25f 0 6px, transparent 6px 10px);
`

const Card = styled.section`
  position: relative;
  height: 1552px;
  overflow: hidden;
  background: #fff;
  border-radius: 16px 0 0 16px;
`

const CardHeader = styled.header`
  display: flex;
  align-items: center;
  height: 80px;
  padding: 0 40px;
  border-bottom: 2px solid #f3f3f3;
  color: #323336;
  font-size: 30px;
  font-weight: 600;
`

const Tabs = styled.nav`
  display: flex;
  align-items: center;
  gap: 42.6px;
  height: 80px;
  padding-left: 34px;
  border-bottom: 2px solid #f3f3f3;
`

const Tab = styled.div`
  display: flex;
  align-items: center;
  gap: 10px;
  color: #646464;
  font-weight: 500;

  svg {
    fill: none;
    stroke: currentColor;
    stroke-width: 1.8;
    stroke-linecap: round;
    stroke-linejoin: round;
  }
`

const SectionTitle = styled.div`
  display: flex;
  align-items: baseline;
  gap: 16px;
  height: 120px;
  padding: 54px 0 0 48px;

  h2 {
    color: #323336;
    font-size: 30px;
    font-weight: 600;
    line-height: 36px;
  }

  span {
    color: #8e8e8e;
  }
`

const Table = styled.div`
  margin-left: 16px;
  border-top: 2px solid #f3f3f3;
`

const Row = styled.div`
  display: grid;
  grid-template-columns: 191px 180px 160px 180px 1fr;
  height: 72px;
  border-bottom: 2px solid #f3f3f3;
`

const HeadRow = styled(Row)`
  height: 73px;
`

const Cell = styled.div`
  display: flex;
  align-items: center;
  padding-left: 16px;
  border-right: 2px solid #f3f3f3;
  color: #747474;
  white-space: nowrap;
`

const HeadCell = styled(Cell)`
  color: #8e8e8e;
  font-weight: 500;
`

const PromptCell = styled(Cell)`
  color: #34363a;
  font-weight: 500;
`

const Stack = styled.div`
  display: flex;
`

const Avatar = styled.div<{ size: number }>`
  position: relative;
  display: flex;
  flex: none;
  align-items: center;
  justify-content: center;
  width: ${({ size }) => size}px;
  height: ${({ size }) => size}px;
  overflow: hidden;
  border: 2px solid #f3f3f3;
  border-radius: 50%;
  background: #fff;
  color: #000;

  &:not(:first-child) {
    margin-left: ${({ size }) => 32 - size}px;
  }

  /* earlier avatars sit above the later ones */
  &:nth-child(1) { z-index: 4; }
  &:nth-child(2) { z-index: 3; }
  &:nth-child(3) { z-index: 2; }
  &:nth-child(4) { z-index: 1; }
`

const Mention = styled.div<{ yes: boolean }>`
  display: flex;
  align-items: center;
  justify-content: center;
  width: 40px;
  height: 40px;
  border-radius: 50%;
  background: ${({ yes }) => (yes ? '#e0fbd6' : '#fbdcd2')};

  svg {
    fill: none;
    stroke: #2e2f33;
    stroke-width: 2;
    stroke-linecap: round;
    stroke-linejoin: round;
  }
`

const Dimmer = styled.div`
  position: absolute;
  inset: 0;
  z-index: 5;
  border-bottom: 2px solid rgba(190, 195, 200, 0.45);
  background: rgba(0, 0, 0, 0.5);
`

const Drawer = styled.aside`
  position: absolute;
  top: 0;
  right: 0;
  bottom: 0;
  z-index: 6;
  width: 1536px;
  padding: 48px 48px 0;
  border-left: 2px solid #efefef;
  background: #fefefe;
  box-shadow: 0 0 40px rgba(0, 0, 0, 0.08);
`

const WindowEdge = styled.div`
  position: absolute;
  inset: 0;
  z-index: 7;
  border-top: 2px solid rgba(0, 0, 0, 0.13);
  pointer-events: none;
`

const Toolbar = styled.div`
  display: flex;
  align-items: center;
  justify-content: space-between;
  height: 52px;
`

const strokeIcon = css`
  svg {
    fill: none;
    stroke: #909297;
    stroke-width: 2.5;
    stroke-linecap: round;
    stroke-linejoin: round;
  }
`

const IconButton = styled.button`
  display: flex;
  align-items: center;
  justify-content: center;
  width: 48px;
  height: 48px;
  padding: 0;
  border: 2px solid #eee;
  border-radius: 8px;
  background: #fff;
  ${strokeIcon}
`

const Pager = styled.div`
  display: flex;
  width: 102px;
  height: 52px;
  border: 2px solid #eee;
  border-radius: 8px;
`

const PagerButton = styled.button`
  display: flex;
  flex: 1;
  align-items: center;
  justify-content: center;
  padding: 0;
  border: 0;
  background: none;
  ${strokeIcon}

  & + & {
    border-left: 2px solid #eee;
  }
`

const MetaGrid = styled.div`
  display: grid;
  grid-template-columns: repeat(4, 1fr);
  margin-top: 32px;
`

const MetaLabel = styled.div`
  color: #303134;
  font-weight: 600;
  line-height: 40px;
`

const MetaValue = styled.div`
  margin-top: 7px;
  color: #66686c;
  line-height: 40px;
`

const ModelPicker = styled.div`
  display: flex;
  gap: 16px;
  margin-top: 31px;
`

const ModelOption = styled.button`
  display: flex;
  align-items: center;
  justify-content: center;
  width: 72px;
  height: 72px;
  padding: 0;
  border: 2px solid #dfdfdf;
  border-radius: 50%;
  background: #fff;
  color: #000;

  &:disabled {
    border-color: #efefef;
    color: #cdcfd1;
  }
`

const SelectedModel = styled(ModelOption)`
  border: 0;
  background: linear-gradient(#4b4b4b, #2f2f2f 50%);

  span {
    display: flex;
    align-items: center;
    justify-content: center;
    width: 48px;
    height: 48px;
    border-radius: 50%;
    background: #fff;
  }
`

const Label = styled.div`
  color: #989aa0;
  font-size: 24px;
  line-height: 32px;
`

const PromptBlock = styled.div`
  display: flex;
  flex-direction: column;
  align-items: flex-end;
  gap: 18px;
  margin-top: 50px;
`

const Bubble = styled.div`
  padding: 23px 32px;
  border-radius: 16px;
  background: #f5f5f5;
  color: #303134;
  line-height: 42px;
`

const Queries = styled.div`
  display: flex;
  flex-direction: column;
  align-items: flex-start;
  gap: 16px;
  margin: 58px 0;

  ${Label} {
    margin-bottom: 6px;
  }
`

const Query = styled.div`
  padding: 18px 24px;
  border-radius: 16px;
  background: #4a4a4a;
  color: #fff;
  line-height: 42px;
`

const Answer = styled.article`
  height: 700px;
  margin-top: 22px;
  padding: 24px 32px;
  border-radius: 16px;
  background: #f5f5f5;
  color: #384152;
  line-height: 42.25px;

  h3 {
    margin: 34px 0 16px;
    color: #17181b;
    font-size: 29.5px;
    font-weight: 600;
  }

  ul {
    margin-top: 33px;
    padding-left: 100px;
    list-style: none;
  }

  li {
    position: relative;
    margin-bottom: 32.5px;
  }

  li::before {
    content: '';
    position: absolute;
    left: -33px;
    top: 17px;
    width: 8px;
    height: 8px;
    border-radius: 50%;
    background: #d0d3d8;
  }

  strong {
    color: #66686c;
    font-weight: 600;
  }
`

const Source = styled.span`
  color: #66686c;
  font-family: 'DejaVu Sans Mono', monospace;
  font-size: 26px;
  line-height: 1;
  vertical-align: -1px;

  i {
    color: #a3a5a9;
    font-style: normal;
  }
`
